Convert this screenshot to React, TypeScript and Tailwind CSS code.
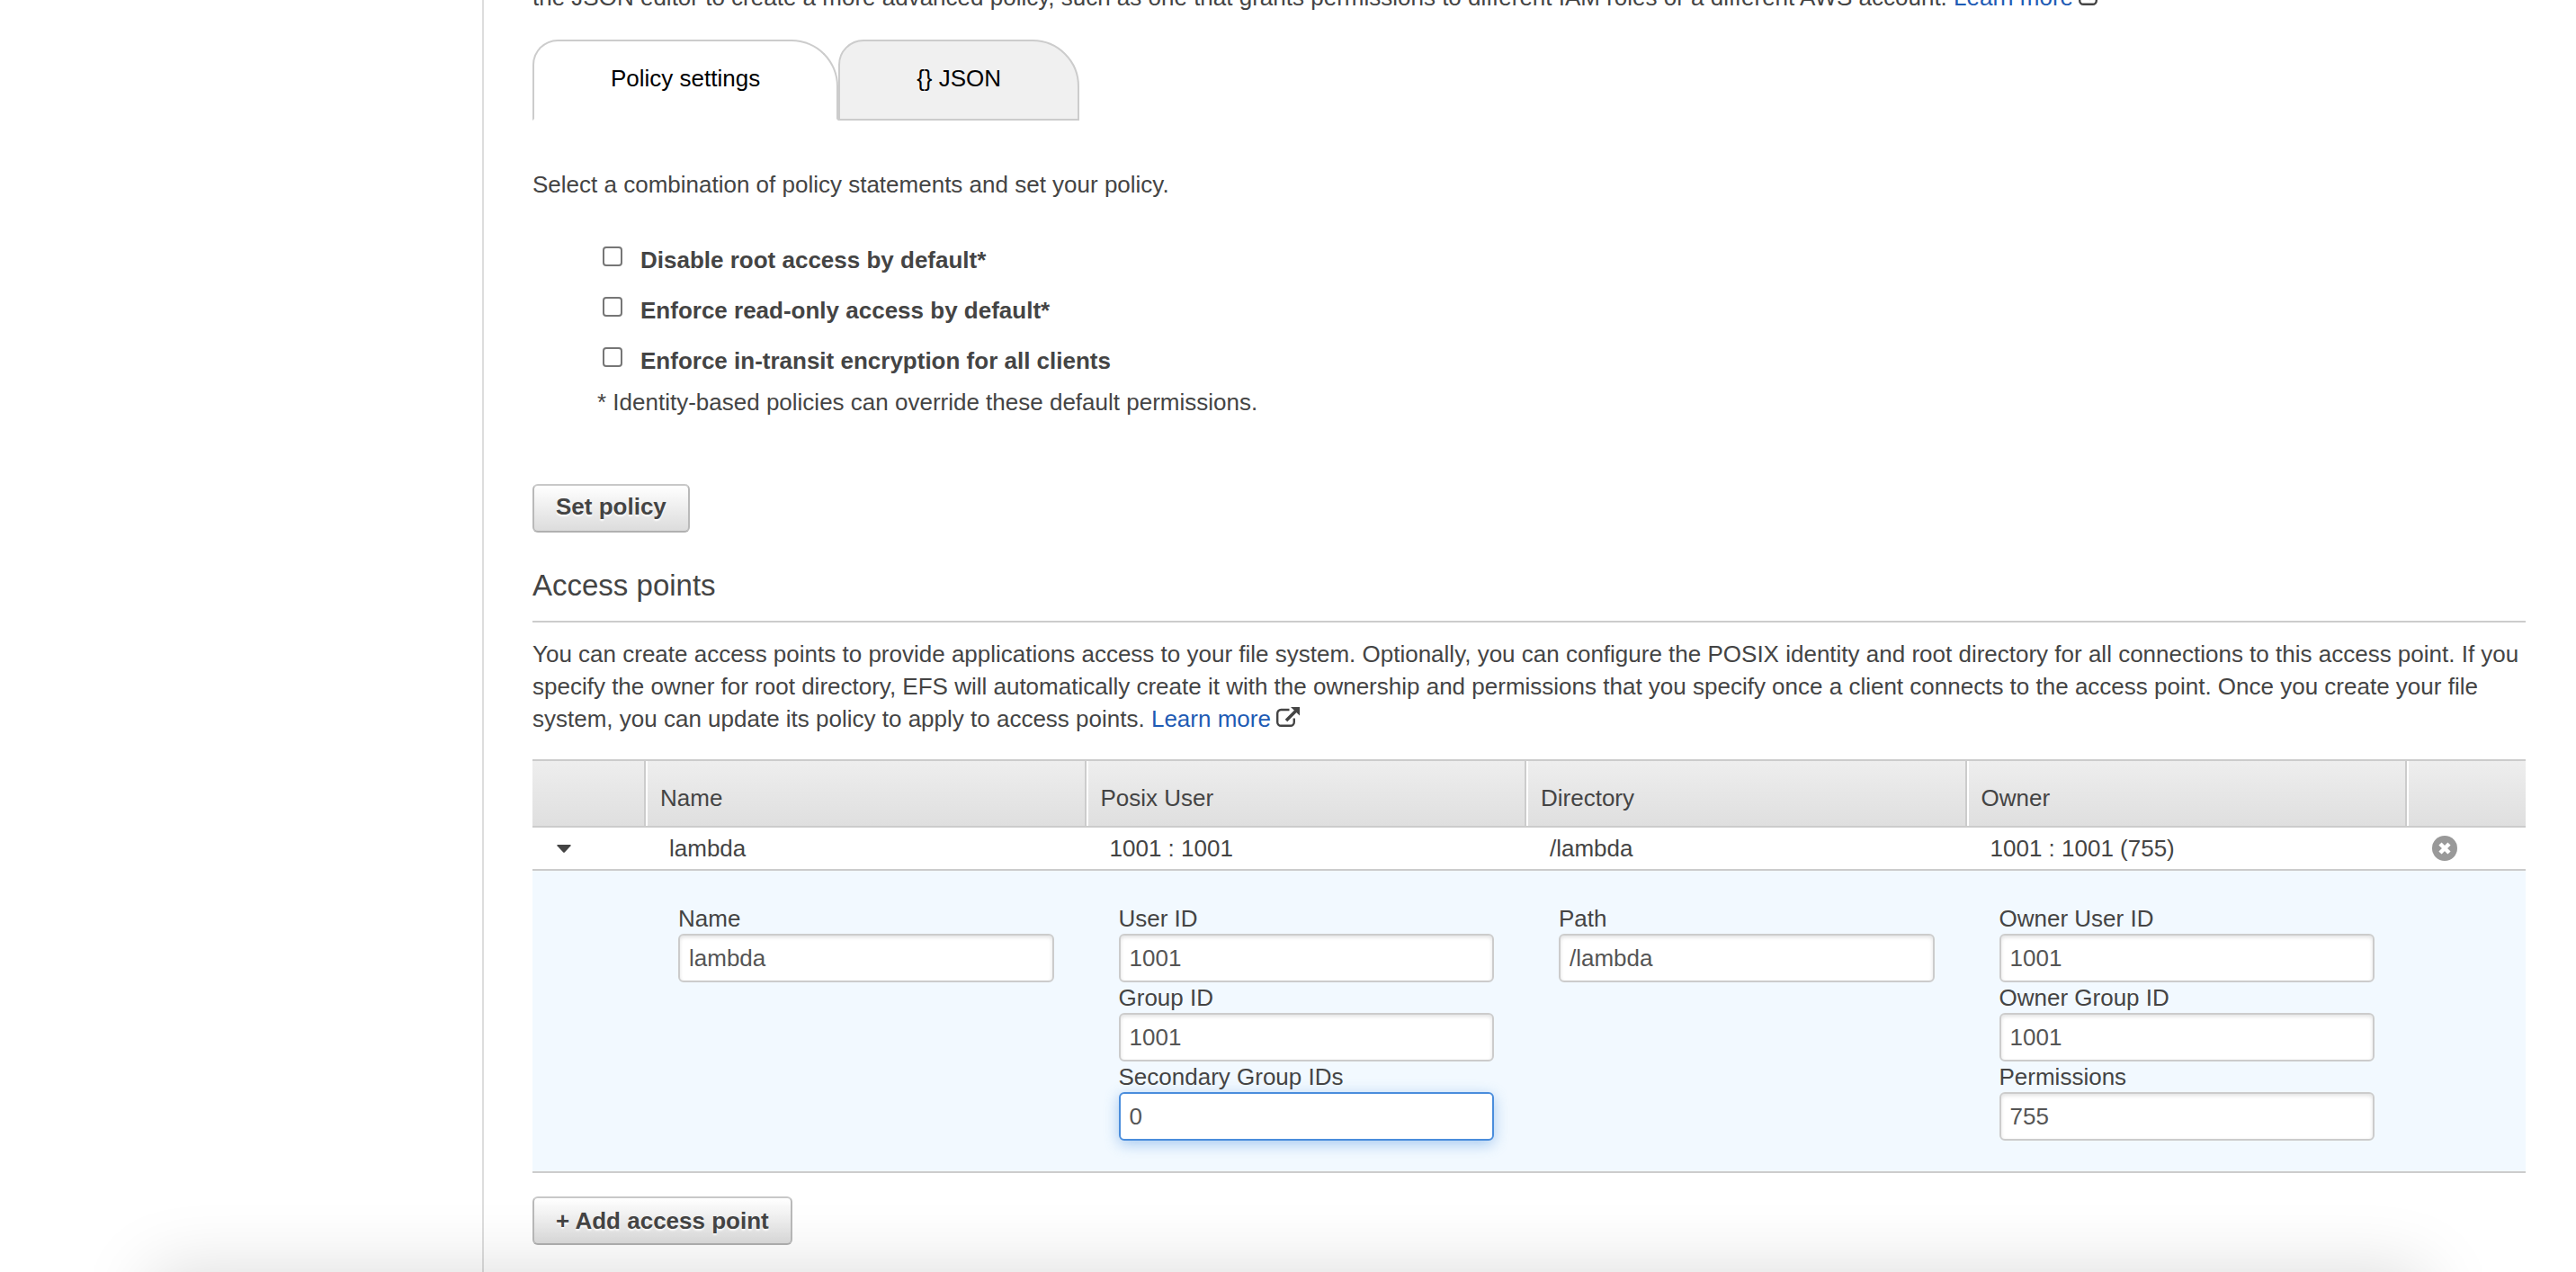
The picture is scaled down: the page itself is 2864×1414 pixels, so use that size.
import React from "react";

function ExternalIcon() {
  return (
    <svg viewBox="0 0 26 22" className="ml-1.5 inline-block h-[22px] w-[26px] align-baseline" fill="none" stroke="#444" aria-hidden="true">
      <path d="M14.5 3H5.2a4 4 0 0 0-4 4v9.8a4 4 0 0 0 4 4h10.6a4 4 0 0 0 4-4v-4.3" strokeWidth="2.4" />
      <path d="M11 15 22 4" strokeWidth="3.6" />
      <path d="M16 0h10v9.5z" fill="#444" stroke="none" />
    </svg>
  );
}

const policies = [
  { id: "root", label: "Disable root access by default*" },
  { id: "readonly", label: "Enforce read-only access by default*" },
  { id: "transit", label: "Enforce in-transit encryption for all clients" },
];

const buttonClass =
  "block h-[54px] rounded-md border-2 border-[#b9b9b9] border-t-[#c8c8c8] border-b-[#b0b0b0] bg-linear-to-b from-white to-[#dcdcdc] px-6 font-bold text-[#444] text-shadow-[0_2px_2px_#fff]";

const inputClass =
  "block h-[54px] w-full rounded-md border-2 border-[#ccc] bg-white px-2.5 text-[#555] shadow-[inset_0_2px_4px_rgba(0,0,0,0.12)] outline-none";

const activeInputClass =
  "block h-[54px] w-full rounded-md border-2 border-[#4a8ddc] bg-white px-2.5 text-[#555] shadow-[0_4px_16px_rgba(74,141,220,0.45)] outline-none";

type FieldProps = { id: string; label: string; value: string; active?: boolean };

function Field({ id, label, value, active }: FieldProps) {
  return (
    <div>
      <label htmlFor={id} className="block leading-[34px]">
        {label}
      </label>
      <input id={id} type="text" defaultValue={value} className={active ? activeInputClass : inputClass} />
    </div>
  );
}

function HeaderCell({ children }: { children?: React.ReactNode }) {
  return (
    <th scope="col" className="border-y-2 border-[#ccc] bg-linear-to-b from-[#eee] to-[#dfdfdf] p-0 text-left font-normal">
      <div className="h-[72px] border-r-2 border-l-2 border-r-[#ccc] border-l-white pt-[23px] pl-3.5">{children}</div>
    </th>
  );
}

function AccessPoints() {
  const cell = "border-b-2 border-[#ccc] py-[5px] pl-[26px]";
  const detail = "border-b-2 border-[#ccc] bg-[#f2f9ff] px-9 pt-9 pb-[34px] align-top";
  return (
    <table className="mt-[27px] w-full table-fixed border-separate border-spacing-0">
      <colgroup>
        <col className="w-[126px]" />
        <col />
        <col />
        <col />
        <col />
        <col className="w-[132px]" />
      </colgroup>
      <thead>
        <tr>
          <th className="border-y-2 border-[#ccc] bg-linear-to-b from-[#eee] to-[#dfdfdf] p-0" aria-label="Expand">
            <div className="h-[72px] border-r-2 border-[#ccc]" />
          </th>
          <HeaderCell>Name</HeaderCell>
          <HeaderCell>Posix User</HeaderCell>
          <HeaderCell>Directory</HeaderCell>
          <HeaderCell>Owner</HeaderCell>
          <th className="border-y-2 border-[#ccc] bg-linear-to-b from-[#eee] to-[#dfdfdf] p-0" aria-label="Remove">
            <div className="h-[72px] border-l-2 border-white" />
          </th>
        </tr>
      </thead>
      <tbody>
        <tr>
          <td className={cell}>
            <button type="button" aria-label="Collapse lambda" aria-expanded="true" className="flex h-9 w-[18px] items-center justify-center">
              <svg viewBox="0 0 16 9" className="h-[9px] w-4" fill="#444">
                <path d="M1 0h14q1 .5.5 1.200L8.800 8.500q-.8.700-1.600 0L.5 1.200Q0 .5 1 0z" />
              </svg>
            </button>
          </td>
          <td className={cell}>lambda</td>
          <td className={cell}>1001 : 1001</td>
          <td className={cell}>/lambda</td>
          <td className={cell}>1001 : 1001 (755)</td>
          <td className={cell}>
            <button type="button" aria-label="Remove lambda" className="flex h-9 w-8 items-center justify-center">
              <svg viewBox="0 0 28 28" className="h-7 w-7">
                <circle cx="14" cy="14" r="14" fill="#999" />
                <path d="m9 9 10 10m0-10-10 10" stroke="#fff" strokeWidth="4.500" />
              </svg>
            </button>
          </td>
        </tr>
        <tr>
          <td className={detail} />
          <td className={detail}>
            <Field id="name" label="Name" value="lambda" />
          </td>
          <td className={detail}>
            <Field id="user-id" label="User ID" value="1001" />
            <Field id="group-id" label="Group ID" value="1001" />
            <Field id="secondary-ids" label="Secondary Group IDs" value="0" active />
          </td>
          <td className={detail}>
            <Field id="path" label="Path" value="/lambda" />
          </td>
          <td className={detail}>
            <Field id="owner-user-id" label="Owner User ID" value="1001" />
            <Field id="owner-group-id" label="Owner Group ID" value="1001" />
            <Field id="permissions" label="Permissions" value="755" />
          </td>
          <td className={detail} />
        </tr>
      </tbody>
    </table>
  );
}

export default function App() {
  return (
    <div className="relative flex min-h-screen overflow-hidden bg-white font-['Liberation_Sans',Arial,sans-serif] text-[26px] leading-9 text-[#444]">
      <aside className="w-[538px] shrink-0 border-r-2 border-[#ddd]" />
      <main className="min-w-0 flex-1 pr-14 pl-[54px]">
        <p className="-mt-[21px]">
          the JSON editor to create a more advanced policy, such as one that grants permissions to different IAM roles or a different AWS account.{" "}
          <a href="#policy-docs" className="text-[#1e5bb4]">
            Learn more
          </a>
          <ExternalIcon />
        </p>

        <div role="tablist" className="mt-[29px] flex text-black">
          <button
            type="button"
            role="tab"
            aria-selected="true"
            className="h-[90px] rounded-tl-[28px] rounded-tr-[52px] border-2 border-[#ccc] border-b-transparent px-[85px] pb-1"
          >
            Policy settings
          </button>
          <button
            type="button"
            role="tab"
            aria-selected="false"
            className="h-[90px] rounded-tl-[28px] rounded-tr-[52px] border-2 border-[#ccc] bg-[#f0f0f0] px-[85px] pb-1"
          >
            {"{} JSON"}
          </button>
        </div>

        <p className="mt-[53px]">Select a combination of policy statements and set your policy.</p>

        <div className="mt-12 flex flex-col gap-5 pl-[78px]">
          {policies.map((p) => (
            <div key={p.id} className="flex items-start gap-5">
              <input
                id={p.id}
                type="checkbox"
                className="mt-[3px] size-[22px] shrink-0 appearance-none rounded border-2 border-[#767676] bg-white checked:bg-[#767676]"
              />
              <label htmlFor={p.id} className="font-bold">
                {p.label}
              </label>
            </div>
          ))}
        </div>
        <p className="mt-2.5 pl-[72px]">* Identity-based policies can override these default permissions.</p>

        <button type="button" className={buttonClass + " mt-[73px] pb-1"}>
          Set policy
        </button>

        <h2 className="mt-[39px] border-b-2 border-[#ccc] pb-[19px] text-[33px] leading-10">Access points</h2>
        <p className="mt-[17px]">
          You can create access points to provide applications access to your file system. Optionally, you can configure the POSIX identity and
          root directory for all connections to this access point. If you specify the owner for root directory, EFS will automatically create
          it with the ownership and permissions that you specify once a client connects to the access point. Once you create your file system,
          you can update its policy to apply to access points.{" "}
          <a href="#access-point-docs" className="text-[#1e5bb4]">
            Learn more
          </a>
          <ExternalIcon />
        </p>

        <AccessPoints />

        <button type="button" className={buttonClass + " mt-[26px]"}>
          + Add access point
        </button>
      </main>
      <div className="pointer-events-none absolute inset-x-[168px] top-full h-24 shadow-[0_0_80px_rgba(0,0,0,0.15)]" />
    </div>
  );
}
